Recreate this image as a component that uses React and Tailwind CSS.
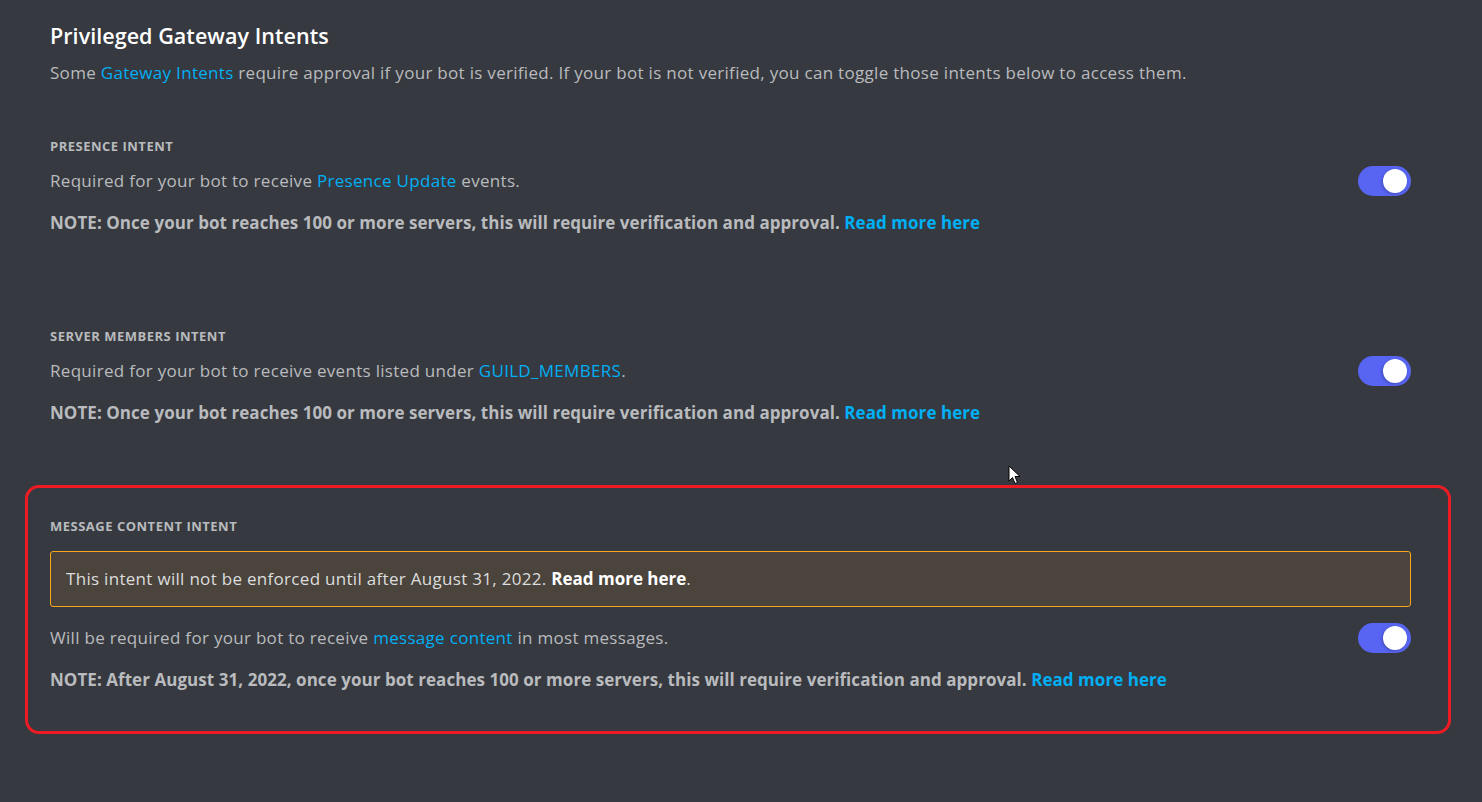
import React from 'react';

const font = { fontFamily: '"Open Sans", "Noto Sans", sans-serif' };

const Link = ({ children, bold }) => (
    <span className={bold ? 'text-[#00aff4] font-bold' : 'text-[#00aff4]'}>{children}</span>
);

const Toggle = () => (
    <div className="relative w-[53px] h-[30px] rounded-full bg-[#5865f2] shrink-0">
        <div className="absolute right-[4px] top-[3px] w-[24px] h-[24px] rounded-full bg-white shadow-[-1px_1px_3px_rgba(0,0,0,0.25)]" />
    </div>
);

const Label = ({ children }) => (
    <div className="text-[13px] leading-[16px] font-bold uppercase text-[#b9bbbe] tracking-[0.5px]">{children}</div>
);

const Note = ({ children }) => (
    <div className="text-[17px] leading-[20px] font-bold text-[#b9bbbe] tracking-[0.05px]">{children}</div>
);

const Row = ({ children, className }) => (
    <div className={'flex items-center justify-between ' + (className || '')}>
        <div className="text-[17px] leading-[20px] text-[#b9bbbe] tracking-[0.3px]">{children}</div>
        <Toggle />
    </div>
);

const Cursor = () => (
    <svg className="absolute left-[1008px] top-[465px]" width="14" height="20" viewBox="0 0 14 20">
        <path d="M1 1 L1 16 L4.5 12.5 L7 18.5 L9.5 17.5 L7 11.5 L12 11.5 Z" fill="#fff" stroke="#000" strokeWidth="1" strokeLinejoin="round" />
    </svg>
);

export default function App() {
    return (
        <div className="relative w-[1482px] h-[802px] bg-[#36393f] overflow-hidden" style={font}>
            <div className="pl-[50px] pr-[71px] pt-[24px]">
                <h1 className="text-[21.5px] leading-[24px] font-semibold text-white tracking-[0.05px]">Privileged Gateway Intents</h1>
                <p className="mt-[15px] text-[17px] leading-[20px] text-[#b9bbbe] tracking-[0.3px]">
                    Some <Link>Gateway Intents</Link> require approval if your bot is verified. If your bot is not verified, you can toggle those intents below to access them.
                </p>

                <section className="mt-[55px]">
                    <Label>Presence Intent</Label>
                    <Row className="mt-[12px]">
                        Required for your bot to receive <Link>Presence Update</Link> events.
                    </Row>
                    <div className="mt-[17px]">
                        <Note>
                            NOTE: Once your bot reaches 100 or more servers, this will require verification and approval. <Link bold>Read more here</Link>
                        </Note>
                    </div>
                </section>

                <section className="mt-[95px]">
                    <Label>Server Members Intent</Label>
                    <Row className="mt-[12px]">
                        Required for your bot to receive events listed under <Link>GUILD_MEMBERS</Link>.
                    </Row>
                    <div className="mt-[17px]">
                        <Note>
                            NOTE: Once your bot reaches 100 or more servers, this will require verification and approval. <Link bold>Read more here</Link>
                        </Note>
                    </div>
                </section>

                <section className="mt-[62px] -ml-[25px] -mr-[40px] border-[3px] border-[#ed1c24] rounded-[14px] pl-[22px] pr-[37px] pt-[30px] pb-[41px]">
                    <Label>Message Content Intent</Label>
                    <div className="mt-[17px] h-[56px] flex items-center px-[15px] rounded-[3px] border border-[#faa81a] bg-[#4a443c] text-[17px] leading-[20px] text-[#dcddde] tracking-[0.3px]">
                        <span>
                            This intent will not be enforced until after August 31, 2022. <span className="font-bold text-white tracking-normal">Read more here</span>.
                        </span>
                    </div>
                    <Row className="mt-[16px]">
                        Will be required for your bot to receive <Link>message content</Link> in most messages.
                    </Row>
                    <div className="mt-[17px]">
                        <Note>
                            NOTE: After August 31, 2022, once your bot reaches 100 or more servers, this will require verification and approval. <Link bold>Read more here</Link>
                        </Note>
                    </div>
                </section>
            </div>
            <Cursor />
        </div>
    );
}
